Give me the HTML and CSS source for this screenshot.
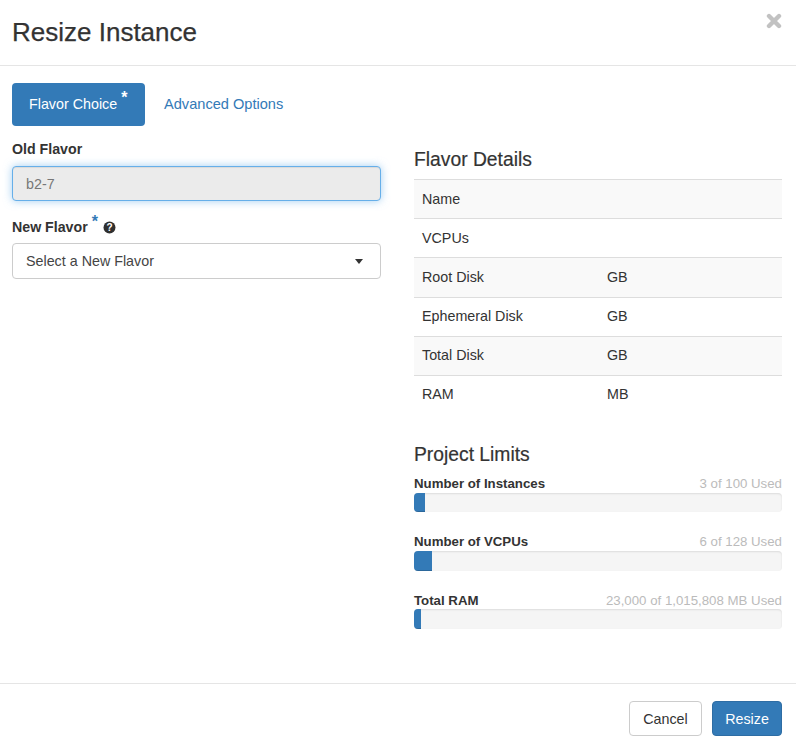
FILE: index.html
```html
<!DOCTYPE html>
<html lang="en">
<head>
<meta charset="utf-8">
<title>Resize Instance</title>
<link rel="stylesheet" href="styles.css">
</head>
<body>
<div class="modal">
  <header class="modal-header">
    <h1>Resize Instance</h1>
    <button class="close" aria-label="Close">
      <svg width="16" height="16" viewBox="0 0 16 16"><path d="M3 3 L13 13 M13 3 L3 13" stroke="#c2c2c2" stroke-width="4.4" stroke-linecap="round"/></svg>
    </button>
  </header>
  <div class="modal-body">
    <nav class="tabs">
      <a class="tab active">Flavor Choice <sup class="star">*</sup></a>
      <a class="tab wide">Advanced Options</a>
    </nav>
    <div class="columns">
      <section class="col-left">
        <label class="label">Old Flavor</label>
        <div class="input focus">b2-7</div>
        <label class="label label-new">New Flavor <sup class="star blue">*</sup>
          <svg class="help" width="13" height="13" viewBox="0 0 13 13"><circle cx="6.5" cy="6.5" r="6" fill="#2f2f2f"/><text x="6.5" y="10" text-anchor="middle" class="help-q">?</text></svg>
        </label>
        <div class="input select">Select a New Flavor<span class="caret"></span></div>
      </section>
      <section class="col-right">
        <h2 class="heading">Flavor Details</h2>
        <table class="details">
          <tr><td class="k">Name</td><td></td></tr>
          <tr><td class="k">VCPUs</td><td></td></tr>
          <tr class="tall"><td class="k">Root Disk</td><td>GB</td></tr>
          <tr><td class="k">Ephemeral Disk</td><td>GB</td></tr>
          <tr><td class="k">Total Disk</td><td>GB</td></tr>
          <tr><td class="k">RAM</td><td>MB</td></tr>
        </table>
        <h2 class="heading limits">Project Limits</h2>
        <div class="limit">
          <div class="limit-row"><strong>Number of Instances</strong><span>3 of 100 Used</span></div>
          <div class="bar"><div class="fill" style="width:3%"></div></div>
        </div>
        <div class="limit">
          <div class="limit-row"><strong>Number of VCPUs</strong><span>6 of 128 Used</span></div>
          <div class="bar"><div class="fill" style="width:4.9%"></div></div>
        </div>
        <div class="limit">
          <div class="limit-row"><strong>Total RAM</strong><span>23,000 of 1,015,808 MB Used</span></div>
          <div class="bar"><div class="fill" style="width:1.9%"></div></div>
        </div>
      </section>
    </div>
  </div>
  <footer class="modal-footer">
    <button class="btn">Cancel</button>
    <button class="btn primary">Resize</button>
  </footer>
</div>
</body>
</html>
```
FILE: styles.css
```css
* { box-sizing: border-box; }
html, body { margin: 0; padding: 0; background: #fff; }
body { font-family: "Liberation Sans", Arial, sans-serif; font-size: 14.3px; line-height: 20px; color: #333; }
.modal { width: 796px; height: 749px; display: flex; flex-direction: column; }
.modal-header { height: 66px; border-bottom: 1px solid #e5e5e5; padding: 0 12px 2px; position: relative; display: flex; align-items: center; }
.modal-header h1 { margin: 0; font-size: 26px; font-weight: 400; line-height: 32px; color: #333; -webkit-text-stroke: 0.25px #333; }
.close { position: absolute; right: 14px; top: 13px; width: 16px; height: 16px; padding: 0; border: 0; background: none; line-height: 0; }
.modal-body { flex: 1; padding: 17px 14px 0 12px; }
.tabs { display: flex; gap: 2px; height: 43px; }
.tab { padding: 11px 17px; border-radius: 4px; color: #337ab7; height: 43px; white-space: nowrap; }
.tab.wide { font-size: 14.6px; }
.tab.active { background: #337ab7; color: #fff; width: 133px; }
.star { font-weight: 700; font-size: 16px; line-height: 0; vertical-align: 6px; }
.star.blue { color: #337ab7; vertical-align: 5px; margin-left: 0; }
.columns { display: flex; gap: 33px; }
.col-left { width: 369px; flex: none; padding-top: 13px; }
.col-right { width: 368px; flex: none; padding-top: 24px; }
.label { display: block; font-weight: 700; font-size: 14.2px; height: 20px; margin-bottom: 7px; }
.label-new { margin-top: 16px; margin-bottom: 6px; }
.help { vertical-align: -2px; margin-left: 1px; }
.help-q { font-family: "Liberation Sans", Arial, sans-serif; font-size: 10px; font-weight: 700; fill: #fff; }
.input { height: 36px; border: 1px solid #ccc; border-radius: 4px; padding: 7px 13px; position: relative; color: #444; }
.input.focus { height: 35px; background: #ebebeb; color: #777; border-color: #66afe9; box-shadow: inset 0 1px 1px rgba(0,0,0,.075), 0 0 8px rgba(102,175,233,.6); }
.caret { position: absolute; right: 17px; top: 15px; width: 0; height: 0; border-left: 4.5px solid transparent; border-right: 4.5px solid transparent; border-top: 5px solid #333; }
.heading { margin: 0; font-size: 19.3px; font-weight: 400; line-height: 20px; height: 20px; color: #333; -webkit-text-stroke: 0.2px #333; }
.details { width: 100%; border-collapse: collapse; margin-top: 9px; table-layout: fixed; border-top: 1px solid #ddd; }
.details td { height: 39px; padding: 0 8px; border-top: 1px solid #ddd; vertical-align: middle; }
.details tr:first-child td { border-top: 0; height: 38.5px; }
.details tr:nth-child(odd) td { background: #f9f9f9; }
.details .tall td { height: 40px; }
.details .tall ~ tr td { padding-bottom: 2px; }
.details .k { width: 185px; }
.limits { margin-top: 31px; margin-bottom: 8px; }
.limit { height: 58px; }
.limit-row { display: flex; justify-content: space-between; font-size: 13.25px; line-height: 22px; height: 20px; }
.limit:last-child .limit-row { line-height: 24px; }
.limit-row span { color: #bbb; }
.limit-row strong { color: #333; }
.bar { height: 20px; background: #f5f5f5; border-radius: 4px; overflow: hidden; box-shadow: inset 0 1px 2px rgba(0,0,0,.1); margin-top: 0; }
.heading + .limit .bar { height: 19px; }
.fill { height: 100%; background: #337ab7; box-shadow: inset 0 -1px 0 rgba(0,0,0,.15); }
.modal-footer { height: 66px; border-top: 1px solid #e5e5e5; padding: 17px 14px 0 0; display: flex; justify-content: flex-end; gap: 10px; align-items: flex-start; }
.btn { height: 35px; width: 73px; padding: 0; border: 1px solid #ccc; border-radius: 4px; background: #fff; color: #333; font: 14.3px/20px "Liberation Sans", Arial, sans-serif; }
.btn.primary { width: 70px; background: #337ab7; border-color: #2e6da4; color: #fff; }
```
